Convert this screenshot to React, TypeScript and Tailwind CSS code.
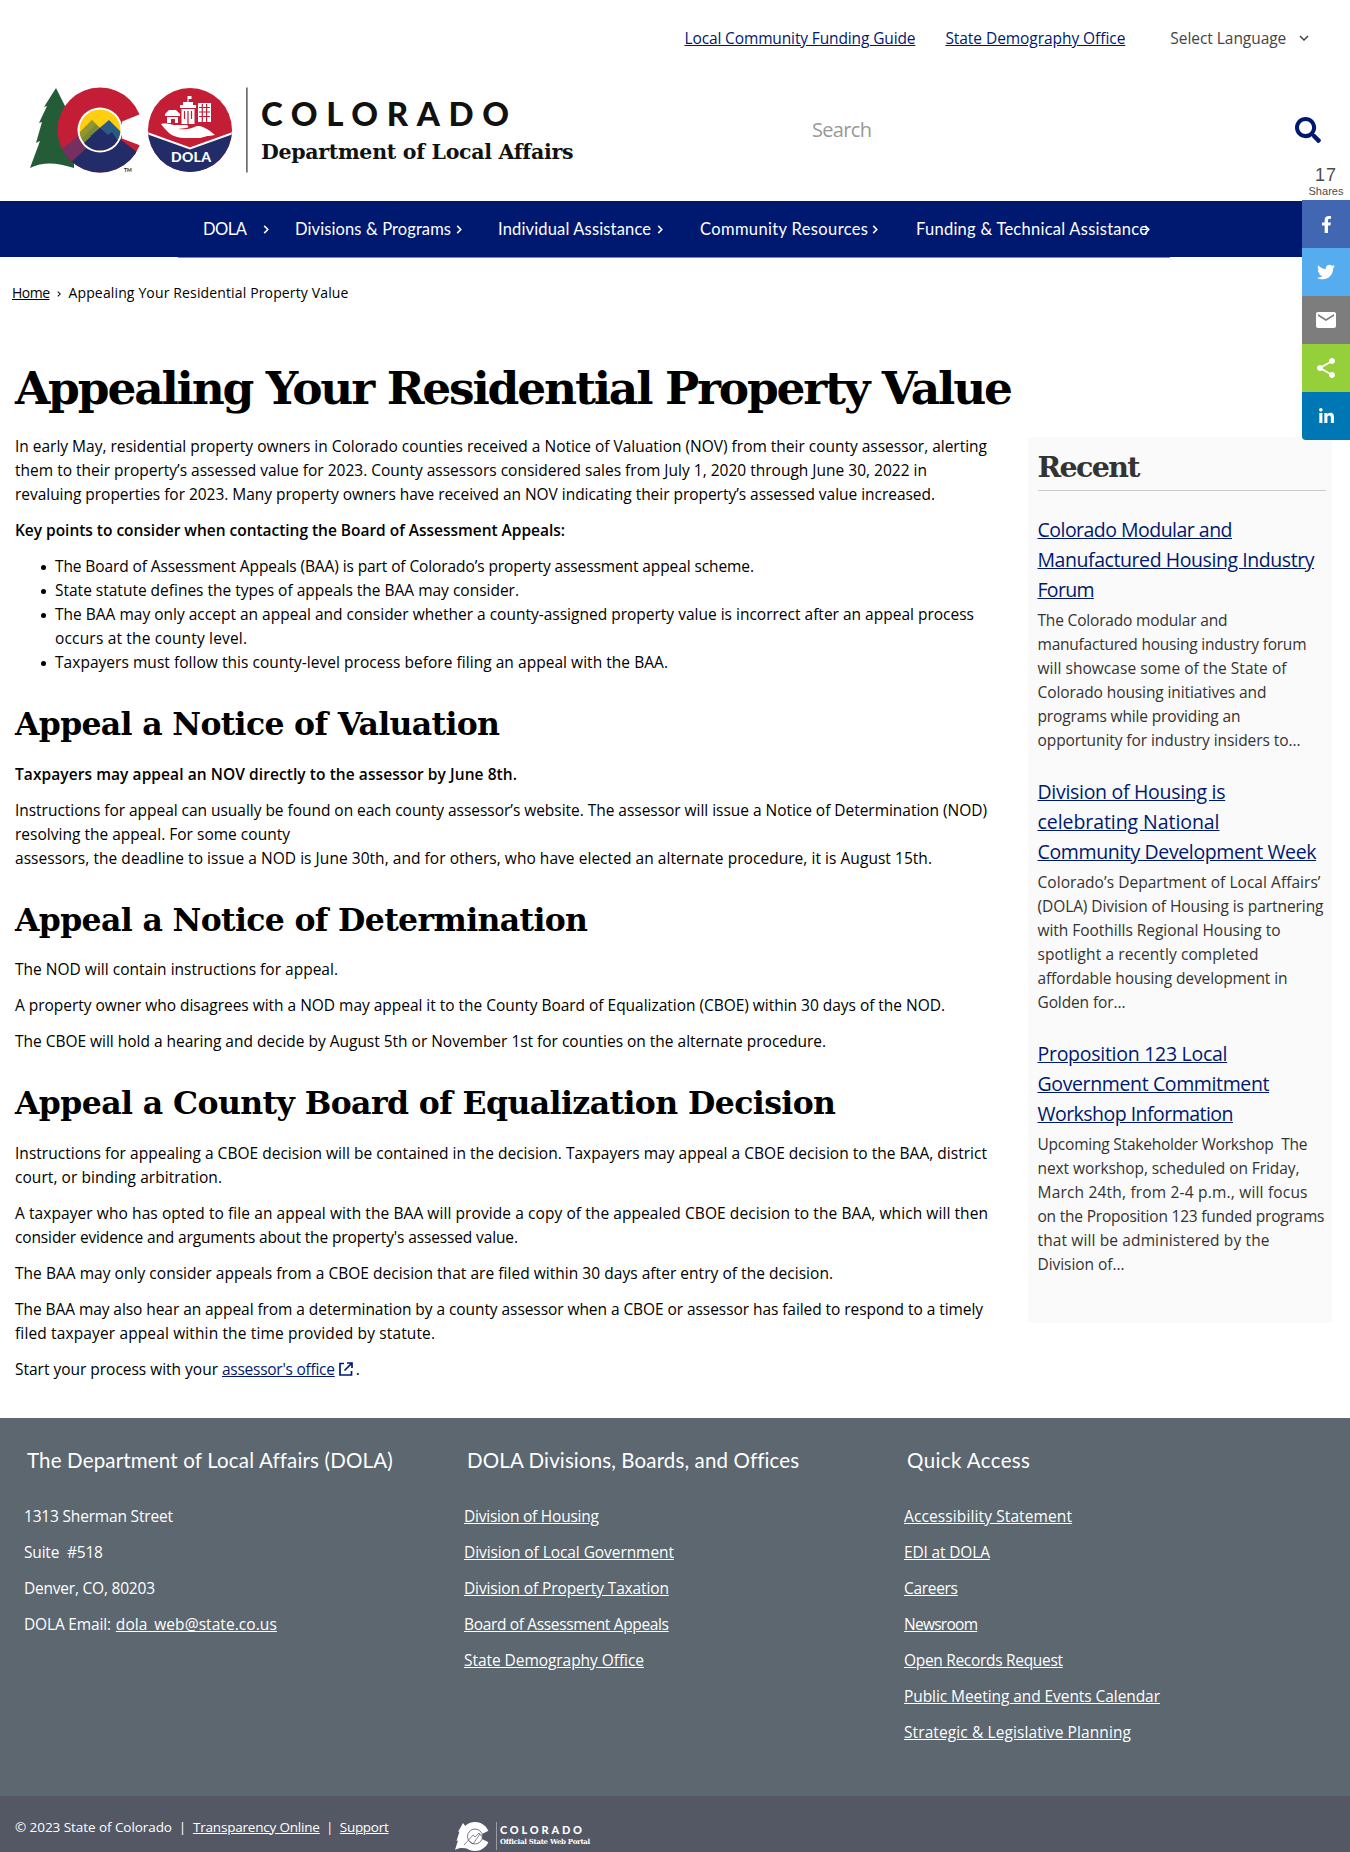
import { useLayoutEffect, useRef, type ReactNode } from 'react';
import { FaFacebookF, FaLinkedinIn, FaSearch, FaTwitter } from 'react-icons/fa';
import { MdEmail, MdShare } from 'react-icons/md';

/** One line of text whose tracking is adjusted so that it spans `w` pixels. */
function Line({ w, className = '', children }: { w: number; className?: string; children: string }) {
  const ref = useRef<HTMLSpanElement>(null);
  useLayoutEffect(() => {
    const el = ref.current;
    if (!el) return;
    el.style.letterSpacing = '0px';
    const natural = el.getBoundingClientRect().width;
    el.style.letterSpacing = `${(w - natural) / Math.max(1, children.length - 1)}px`;
  }, [w, children]);
  return (
    <span ref={ref} className={`inline-block whitespace-pre ${className}`}>
      {children}
    </span>
  );
}

type Row = [string, number];

function Lines({ rows, className = '' }: { rows: Row[]; className?: string }) {
  return (
    <>
      {rows.map(([text, w]) => (
        <span key={text} className="block">
          <Line w={w} className={className}>
            {text}
          </Line>
        </span>
      ))}
    </>
  );
}

function P({ rows, className = '' }: { rows: Row[]; className?: string }) {
  return (
    <p className={`mb-3 ${className}`}>
      <Lines rows={rows} />
    </p>
  );
}

function Bullet({ rows }: { rows: Row[] }) {
  return (
    <li className="flex">
      <span className="mt-[11px] mr-[9px] ml-[26px] h-[5px] w-[5px] shrink-0 rounded-full bg-black" />
      <div>
        <Lines rows={rows} />
      </div>
    </li>
  );
}

function H2({ w, children }: { w: number; children: string }) {
  return (
    <h2 className="mt-[29px] mb-[16.5px] h-[42px] font-['DejaVu_Serif',serif] text-[31.5px] font-bold leading-[42px]">
      <Line w={w}>{children}</Line>
    </h2>
  );
}

function Chevron({ className = 'h-[9px] w-[6px]' }: { className?: string }) {
  return (
    <svg viewBox="0 0 6 10" className={`shrink-0 ${className}`} fill="none" stroke="currentColor" strokeWidth="1.7">
      <path d="M1 1l4 4-4 4" />
    </svg>
  );
}

function Logo() {
  return (
    <svg viewBox="0 0 220 88" className="h-[88px] w-[220px] shrink-0">
      <defs>
        <clipPath id="c-disc">
          <circle cx="70" cy="44" r="42.5" />
        </clipPath>
        <clipPath id="sun-disc">
          <circle cx="70" cy="44" r="20.500" />
        </clipPath>
        <clipPath id="dola-disc">
          <circle cx="160" cy="44" r="42" />
        </clipPath>
      </defs>
      <path d="M26 2L14 21l3-1L9 37l3-1L6 57l4-2L0 82c14-7 28-5 44 0V20L38 26z" fill="#235c36" />
      <g clipPath="url(#c-disc)">
        <rect x="27" y="0" width="90" height="88" fill="#c41e36" />
        <path d="M34 71l37-32 40 30v26H40z" fill="#212c68" />
        <path d="M27 66l22-16 10 10-22 20z" fill="#752f60" />
      </g>
      <path d="M92 35.500l21-8.500 5 17-5 16.500-21-8z" fill="#fff" />
      <circle cx="70" cy="44" r="22.500" fill="#fff" />
      <g clipPath="url(#sun-disc)">
        <rect x="48" y="22" width="44" height="44" fill="#ffcf0f" />
        <path d="M42 54l20-20 22 22-20 10z" fill="#7c8a35" />
        <path d="M60 50l19-16 18 18-12 12z" fill="#2b5a84" />
        <path d="M40 70l30-28 8 7 4-3 16 24z" fill="#212c68" />
        <path d="M42 54l20-20 4 4-20 20z" fill="#a5a22c" opacity=".5" />
      </g>
      <text x="94" y="86" fontSize="5" fontWeight="700" fill="#222" fontFamily="Lato, sans-serif">
        TM
      </text>
      <g clipPath="url(#dola-disc)">
        <rect x="117" y="0" width="86" height="88" fill="#c41e36" />
        <path d="M117 47l43 16 43-16v41h-86z" fill="#212c68" />
        <path d="M117 47l43 15.500 43-15.500" fill="none" stroke="#fff" strokeWidth="2" />
      </g>
      <g fill="#fff">
        <path d="M131 38c4-1 9 0 13 1h12c3 0 3 3 0 3l-8 1c10 1 14-1 19-3 6-1 15 6 18 9l-6 1c-4 0-6 2-11 2-12 0-22 1-29-5-3-3-6-6-8-9z" />
        <path d="M135 28l4-4h7l4 4v2h-15z" />
        <path d="M137 31h11v6h-3v-4h-4v4h-4zM150 22h16v-3h-3v-3h-10v3h-3zM151.500 23h13v15h-13z" />
        <path d="M157.500 10h4v3h-3v3h-1zM168 17h13v19h-13z" />
      </g>
      <path
        d="M154.500 25v8M158 25v13M161.500 25v8M172.300 18v18M176.600 18v18M169 21.500h11M169 26h11M169 30.500h11"
        stroke="#c41e36"
        strokeWidth="1.200"
      />
      <text x="141" y="76" fontSize="14" fontWeight="900" fill="#fff" fontFamily="Lato, sans-serif" textLength="40">
        DOLA
      </text>
      <rect x="216.300" y="1.500" width="1.200" height="85" fill="#333" />
    </svg>
  );
}

function FooterLogo() {
  return (
    <svg viewBox="0 0 42 30" className="h-[30px] w-[42px] shrink-0">
      <path d="M8 2L3 11l1.500-.500L1.500 20l1.500-.500L0 29c5-3 9-2 14-1V10z" fill="#fff" />
      <circle cx="20" cy="15.500" r="14.500" fill="#fff" />
      <path d="M27 13l8-4v13l-8-4z" fill="#545864" />
      <circle cx="20" cy="15.500" r="7.500" fill="#fff" stroke="#545864" strokeWidth=".8" />
      <path d="M9 24l9-10 2 2 4-4 4 5M14 20l4 3 7-10" fill="none" stroke="#545864" strokeWidth=".7" />
      <path d="M41.500 1v28" stroke="#9a9ca4" strokeWidth="1" />
    </svg>
  );
}

const nav: { label: string; w: number; item: string; gap: string }[] = [
  { label: 'DOLA', w: 44, item: 'w-[92px]', gap: 'ml-[16px] h-[9px] w-[6px]' },
  { label: 'Divisions & Programs', w: 156, item: 'w-[203px]', gap: 'ml-[5px] h-[9px] w-[6px]' },
  { label: 'Individual Assistance', w: 153, item: 'w-[202px]', gap: 'ml-[6px] h-[9px] w-[6px]' },
  { label: 'Community Resources', w: 168, item: 'w-[216px]', gap: 'ml-[4px] h-[9px] w-[6px]' },
  { label: 'Funding & Technical Assistance', w: 232, item: 'w-[254px]', gap: '-ml-[4px] h-[9px] w-[6px]' },
];

const recent: { title: Row[]; body: Row[] }[] = [
  {
    title: [['Colorado Modular and', 195], ['Manufactured Housing Industry', 277], ['Forum', 57]],
    body: [
      ['The Colorado modular and', 190],
      ['manufactured housing industry forum', 269],
      ['will showcase some of the State of', 249],
      ['Colorado housing initiatives and', 229],
      ['programs while providing an', 203],
      ['opportunity for industry insiders to…', 263],
    ],
  },
  {
    title: [['Division of Housing is', 188], ['celebrating National', 182], ['Community Development Week', 279]],
    body: [
      ['Colorado’s Department of Local Affairs’', 283],
      ['(DOLA) Division of Housing is partnering', 286],
      ['with Foothills Regional Housing to', 243],
      ['spotlight a recently completed', 221],
      ['affordable housing development in', 250],
      ['Golden for…', 88],
    ],
  },
  {
    title: [['Proposition 123 Local', 190], ['Government Commitment', 232], ['Workshop Information', 196]],
    body: [
      ['Upcoming Stakeholder Workshop  The', 270],
      ['next workshop, scheduled on Friday,', 262],
      ['March 24th, from 2-4 p.m., will focus', 270],
      ['on the Proposition 123 funded programs', 287],
      ['that will be administered by the', 232],
      ['Division of…', 87],
    ],
  },
];

const divisions: Row[] = [
  ['Division of Housing', 135],
  ['Division of Local Government', 210],
  ['Division of Property Taxation', 205],
  ['Board of Assessment Appeals', 205],
  ['State Demography Office', 180],
];

const quick: Row[] = [
  ['Accessibility Statement', 168],
  ['EDI at DOLA', 86],
  ['Careers', 54],
  ['Newsroom', 74],
  ['Open Records Request', 159],
  ['Public Meeting and Events Calendar', 256],
  ['Strategic & Legislative Planning', 227],
];

function FooterColumn({ title, w, children }: { title: string; w: number; children: ReactNode }) {
  return (
    <div className="w-[440px]">
      <h3 className="ml-[3px] h-[30px] font-['Lato',sans-serif] text-[20.5px] leading-[30px]">
        <Line w={w}>{title}</Line>
      </h3>
      <div className="mt-[29px] flex flex-col gap-3">{children}</div>
    </div>
  );
}

function FooterLinks({ rows }: { rows: Row[] }) {
  return (
    <>
      {rows.map(([text, w]) => (
        <a key={text} className="h-6">
          <Line w={w} className="underline">
            {text}
          </Line>
        </a>
      ))}
    </>
  );
}

function ShareBar() {
  return (
    <aside className="absolute top-[165px] right-0 w-[48px] text-white">
      <div className="flex h-[35px] flex-col items-center font-['Liberation_Sans',sans-serif] text-[#4c4c4c]">
        <span className="text-[18px] leading-[20px]">
          <Line w={21}>17</Line>
        </span>
        <span className="text-[11px] leading-[12px]">
          <Line w={35}>Shares</Line>
        </span>
      </div>
      <div className="overflow-hidden rounded-bl-[4px]">
        <div className="flex h-12 items-center justify-center bg-[#4267b2]"><FaFacebookF size={17} /></div>
        <div className="flex h-12 items-center justify-center bg-[#55acee]"><FaTwitter size={18} /></div>
        <div className="flex h-12 items-center justify-center bg-[#7d7d7d]"><MdEmail size={24} /></div>
        <div className="flex h-12 items-center justify-center bg-[#95d03a]"><MdShare size={24} /></div>
        <div className="flex h-12 items-center justify-center bg-[#0077b5]"><FaLinkedinIn size={17} /></div>
      </div>
    </aside>
  );
}

export default function App() {
  return (
    <div className="relative flex h-[1852px] w-[1350px] flex-col overflow-hidden bg-white font-['Open_Sans',sans-serif] text-[15.5px] leading-6 text-black">
      <header className="h-[201px]">
        <div className="flex h-[76px] items-center pl-[684.5px] text-[#001970]">
          <Line w={231} className="underline">Local Community Funding Guide</Line>
          <span className="w-[30px]" />
          <Line w={180} className="underline">State Demography Office</Line>
          <span className="w-[45px]" />
          <Line w={116} className="text-[#444]">Select Language</Line>
          <svg viewBox="0 0 10 6" className="ml-[13px] h-[6px] w-[10px]" fill="none" stroke="#444" strokeWidth="1.5">
            <path d="M1 1l4 4 4-4" />
          </svg>
        </div>
        <div className="flex h-[108px] items-center pl-[30px]">
          <Logo />
          <div className="ml-[11px] w-[550px] text-[#111]">
            <div className="font-['Lato',sans-serif] text-[33px] font-black leading-[40px]">
              <Line w={248}>COLORADO</Line>
            </div>
            <div className="mt-[4px] font-['DejaVu_Serif',serif] text-[20.5px] font-bold leading-[30px]">
              <Line w={312}>Department of Local Affairs</Line>
            </div>
          </div>
          <div className="w-[484px] pl-px text-[20px] text-[#999]">
            <Line w={60}>Search</Line>
          </div>
          <FaSearch size={26} className="text-[#001970]" />
        </div>
      </header>

      <nav className="h-[56px] shrink-0 bg-[#001970] font-['Lato',sans-serif] text-[16.5px] text-white">
        <div className="ml-[178px] flex h-[57px] w-[992px] items-center border-b border-[#7c86b8] pl-[25px]">
          {nav.map((n) => (
            <div key={n.label} className={`flex shrink-0 items-center ${n.item}`}>
              <Line w={n.w}>{n.label}</Line>
              <Chevron className={n.gap} />
            </div>
          ))}
        </div>
      </nav>

      <div className="flex h-[71px] shrink-0 items-center pl-[12px] text-[14px]">
        <Line w={38} className="underline">Home</Line>
        <Chevron className="mt-[2px] mr-[7px] ml-[8px] h-[6px] w-[4px]" />
        <Line w={280}>Appealing Your Residential Property Value</Line>
      </div>

      <div className="flex h-[1090px] shrink-0">
        <main className="w-[1028px] pl-[15px]">
          <h1 className="mt-[28px] h-[64px] font-['DejaVu_Serif',serif] text-[45.5px] font-bold leading-[64px]">
            <Line w={998}>Appealing Your Residential Property Value</Line>
          </h1>
          <P
            className="mt-[14px]"
            rows={[
              ['In early May, residential property owners in Colorado counties received a Notice of Valuation (NOV) from their county assessor, alerting', 972],
              ['them to their property’s assessed value for 2023. County assessors considered sales from July 1, 2020 through June 30, 2022 in', 912],
              ['revaluing properties for 2023. Many property owners have received an NOV indicating their property’s assessed value increased.', 920],
            ]}
          />
          <P className="font-semibold" rows={[['Key points to consider when contacting the Board of Assessment Appeals:', 550]]} />
          <ul>
            <Bullet rows={[['The Board of Assessment Appeals (BAA) is part of Colorado’s property assessment appeal scheme.', 699]]} />
            <Bullet rows={[['State statute defines the types of appeals the BAA may consider.', 464]]} />
            <Bullet
              rows={[
                ['The BAA may only accept an appeal and consider whether a county-assigned property value is incorrect after an appeal process', 919],
                ['occurs at the county level.', 192],
              ]}
            />
            <Bullet rows={[['Taxpayers must follow this county-level process before filing an appeal with the BAA.', 613]]} />
          </ul>

          <H2 w={485}>Appeal a Notice of Valuation</H2>
          <P className="font-semibold" rows={[['Taxpayers may appeal an NOV directly to the assessor by June 8th.', 502]]} />
          <P
            rows={[
              ['Instructions for appeal can usually be found on each county assessor’s website. The assessor will issue a Notice of Determination (NOD)', 972],
              ['resolving the appeal. For some county', 275],
              ['assessors, the deadline to issue a NOD is June 30th, and for others, who have elected an alternate procedure, it is August 15th.', 917],
            ]}
          />

          <H2 w={573}>Appeal a Notice of Determination</H2>
          <P rows={[['The NOD will contain instructions for appeal.', 323]]} />
          <P rows={[['A property owner who disagrees with a NOD may appeal it to the County Board of Equalization (CBOE) within 30 days of the NOD.', 930]]} />
          <P rows={[['The CBOE will hold a hearing and decide by August 5th or November 1st for counties on the alternate procedure.', 811]]} />

          <H2 w={821}>Appeal a County Board of Equalization Decision</H2>
          <P
            rows={[
              ['Instructions for appealing a CBOE decision will be contained in the decision. Taxpayers may appeal a CBOE decision to the BAA, district', 972],
              ['court, or binding arbitration.', 207],
            ]}
          />
          <P
            rows={[
              ['A taxpayer who has opted to file an appeal with the BAA will provide a copy of the appealed CBOE decision to the BAA, which will then', 973],
              ["consider evidence and arguments about the property's assessed value.", 503],
            ]}
          />
          <P rows={[['The BAA may only consider appeals from a CBOE decision that are filed within 30 days after entry of the decision.', 818]]} />
          <P
            rows={[
              ['The BAA may also hear an appeal from a determination by a county assessor when a CBOE or assessor has failed to respond to a timely', 968],
              ['filed taxpayer appeal within the time provided by statute.', 420],
            ]}
          />
          <p className="flex items-center">
            <Line w={203}>Start your process with your</Line>
            <Line w={113} className="ml-[4px] text-[#001970] underline">{"assessor's office"}</Line>
            <svg viewBox="0 0 14 14" className="ml-[4px] h-[14px] w-[14px]" fill="none" stroke="#001970" strokeWidth="1.700">
              <path d="M5 1.500H1v11.500h11.500V9M8 1h5v5M13 1L5.500 8.500" />
            </svg>
            <span className="ml-[3px]">.</span>
          </p>
        </main>

        <aside className="mt-[109px] h-[886px] w-[304px] bg-[#fafafa] pl-[9.5px] text-[#333]">
          <h2 className="h-[54px] w-[288px] border-b border-[#ccc] pt-[9px] font-['DejaVu_Serif',serif] text-[28.5px] font-bold leading-[42px]">
            <Line w={103}>Recent</Line>
          </h2>
          <div className="mt-[24px] flex flex-col gap-[25px]">
            {recent.map((r) => (
              <div key={r.title[0][0]}>
                <h3 className="mb-[3px] text-[19.5px] leading-[30px] text-[#001970]">
                  <Lines rows={r.title} className="underline" />
                </h3>
                <div>
                  <Lines rows={r.body} />
                </div>
              </div>
            ))}
          </div>
        </aside>
      </div>

      <footer className="flex h-[434px] shrink-0 flex-col text-white">
        <div className="flex h-[378px] bg-[#5c6770] pt-[27px] pl-[24px]">
          <FooterColumn title="The Department of Local Affairs (DOLA)" w={365}>
            <div className="h-6"><Line w={149}>1313 Sherman Street</Line></div>
            <div className="h-6"><Line w={79}>Suite  #518</Line></div>
            <div className="h-6"><Line w={131}>Denver, CO, 80203</Line></div>
            <div className="flex h-6 gap-[5px]">
              <Line w={87}>DOLA Email:</Line>
              <Line w={161} className="underline">dola_web@state.co.us</Line>
            </div>
          </FooterColumn>
          <FooterColumn title="DOLA Divisions, Boards, and Offices" w={331}>
            <FooterLinks rows={divisions} />
          </FooterColumn>
          <FooterColumn title="Quick Access" w={123}>
            <FooterLinks rows={quick} />
          </FooterColumn>
        </div>
        <div className="flex h-[56px] bg-[#545864] pl-[15px] text-[13.5px]">
          <div className="flex h-[61px] w-[440px] items-center">
            <Line w={157}>© 2023 State of Colorado</Line>
            <span className="w-[21px] text-center">|</span>
            <Line w={127} className="underline">Transparency Online</Line>
            <span className="w-[20px] text-center">|</span>
            <Line w={49} className="underline">Support</Line>
          </div>
          <div className="mt-[25px] flex h-[30px] gap-[3px]">
            <FooterLogo />
            <div className="pt-[2px]">
              <div className="font-['Lato',sans-serif] text-[11px] font-black leading-[13px]"><Line w={82}>COLORADO</Line></div>
              <div className="font-['DejaVu_Serif',serif] text-[7px] leading-[12px] font-bold"><Line w={90}>Official State Web Portal</Line></div>
            </div>
          </div>
        </div>
      </footer>
      <ShareBar />
    </div>
  );
}
